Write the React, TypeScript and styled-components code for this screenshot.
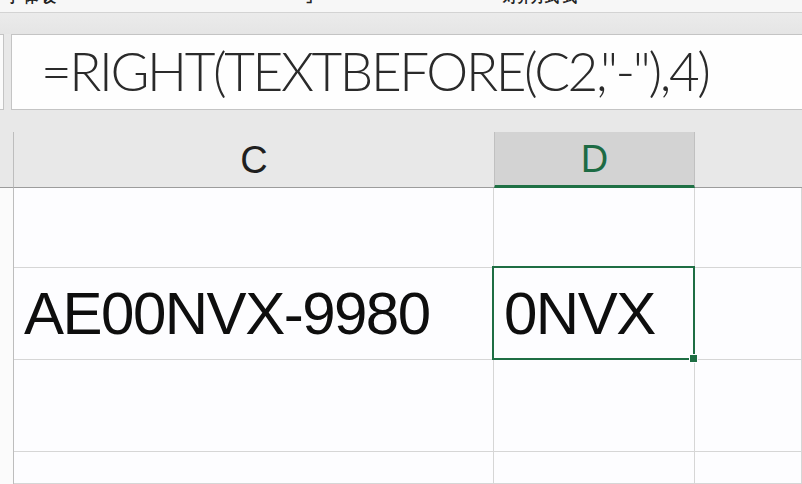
import React from 'react'
import styled, { createGlobalStyle } from 'styled-components'

const GlobalStyle = createGlobalStyle`
    html, body {
        margin: 0;
        padding: 0;
        background: #fdfdfe;
    }
    #root {
        width: 802px;
        height: 484px;
        overflow: hidden;
    }
`

const Window = styled.div`
    width: 802px;
    height: 484px;
    overflow: hidden;
    display: flex;
    flex-direction: column;
    background: #e8e8e8;
    font-family: "Liberation Sans", Arial, sans-serif;
`

// only the bottom edge of the ribbon is visible in the shot
const RibbonStrip = styled.div`
    height: 12px;
    flex: none;
    background: #f7f7f7;
    border-bottom: 1px solid #d3d3d3;
    overflow: hidden;
    display: flex;
    align-items: flex-end;
`

const RibbonLabel = styled.span<{ $left: number }>`
    margin-left: ${p => p.$left}px;
    font-size: 14px;
    line-height: 14px;
    margin-bottom: 8px;
    color: #222;
    font-weight: 700;
    white-space: nowrap;
`

const ToolbarGap = styled.div`
    height: 21px;
    flex: none;
    background: linear-gradient(#ebebeb, #e5e5e5);
`

const FormulaRow = styled.div`
    height: 76px;
    flex: none;
    display: flex;
    background: #e8e8e8;
`

const NameBoxEdge = styled.div`
    width: 3px;
    margin: 0 7px 0 0;
    background: #fbfbfb;
    border: 1px solid #c4c4c4;
    border-left: none;
`

const FormulaBox = styled.div`
    flex: 1;
    background: #fefefe;
    border: 1px solid #c4c4c4;
    border-right: none;
    display: flex;
    align-items: center;
    padding-left: 29px;
    overflow: hidden;
`

const FormulaText = styled.span`
    font-family: Lato, "Open Sans", sans-serif;
    font-weight: 300;
    font-size: 53px;
    letter-spacing: -2.4px;
    color: #2a2a2a;
    white-space: nowrap;
    margin-top: -4px;
`

const HeaderGap = styled.div`
    height: 22px;
    flex: none;
    background: #e8e8e8;
`

const Grid = styled.div`
    flex: 1;
    display: grid;
    grid-template-columns: 14px 480px 201px 1fr;
    grid-template-rows: 56px 80px 92px 92px 1fr;
`

const Corner = styled.div`
    background: #e8e8e8;
    border-right: 1px solid #bdbdbd;
    border-bottom: 1px solid #9c9c9c;
`

const ColHeader = styled.div<{ $active?: boolean }>`
    display: flex;
    align-items: center;
    justify-content: center;
    font-size: 38px;
    padding-top: 2px;
    color: ${p => (p.$active ? '#1d6b44' : '#1f1f1f')};
    background: ${p => (p.$active ? '#d3d3d3' : '#e8e8e8')};
    border-bottom: ${p => (p.$active ? '3px solid #1f7145' : '1px solid #9c9c9c')};
    border-left: ${p => (p.$active ? '1px solid #c0c0c0' : 'none')};
    border-right: ${p => (p.$active ? '1px solid #c0c0c0' : 'none')};
`

const RowHeader = styled.div`
    background: #fbfbfb;
    border-right: 1px solid #bdbdbd;
`

const Cell = styled.div<{ $selected?: boolean }>`
    position: relative;
    background: #fdfdff;
    border-right: 1px solid #d6d6d6;
    border-bottom: 1px solid #d6d6d6;
    display: flex;
    align-items: center;
    padding: 0 10px;
    font-size: 60px;
    letter-spacing: -1.5px;
    color: #0e0e0e;
    white-space: nowrap;

    ${p =>
        p.$selected &&
        `
        &::after {
            content: "";
            position: absolute;
            left: -2px;
            top: -2px;
            right: -1px;
            bottom: -1px;
            border: 2px solid #1e6e44;
        }
        &::before {
            content: "";
            position: absolute;
            right: -4px;
            bottom: -4px;
            width: 7px;
            height: 7px;
            background: #1e6e44;
            border: 1px solid #fdfdff;
            z-index: 1;
        }
    `}
`

const rows: string[][] = [
    ['', ''],
    ['AE00NVX-9980', '0NVX'],
    ['', ''],
    ['', ''],
]

export default function App() {
    return (
        <>
            <GlobalStyle />
            <Window>
                <RibbonStrip>
                    <RibbonLabel $left={6}>字 体 设</RibbonLabel>
                    <RibbonLabel $left={250}>⌟</RibbonLabel>
                    <RibbonLabel $left={190}>对齐方式 式</RibbonLabel>
                </RibbonStrip>
                <ToolbarGap />
                <FormulaRow>
                    <NameBoxEdge />
                    <FormulaBox>
                        <FormulaText>=RIGHT(TEXTBEFORE(C2,"-"),4)</FormulaText>
                    </FormulaBox>
                </FormulaRow>
                <HeaderGap />
                <Grid>
                    <Corner />
                    <ColHeader>C</ColHeader>
                    <ColHeader $active>D</ColHeader>
                    <ColHeader />
                    {rows.map((r, i) => (
                        <React.Fragment key={i}>
                            <RowHeader />
                            <Cell>{r[0]}</Cell>
                            <Cell $selected={i === 1}>{r[1]}</Cell>
                            <Cell />
                        </React.Fragment>
                    ))}
                </Grid>
            </Window>
        </>
    )
}
